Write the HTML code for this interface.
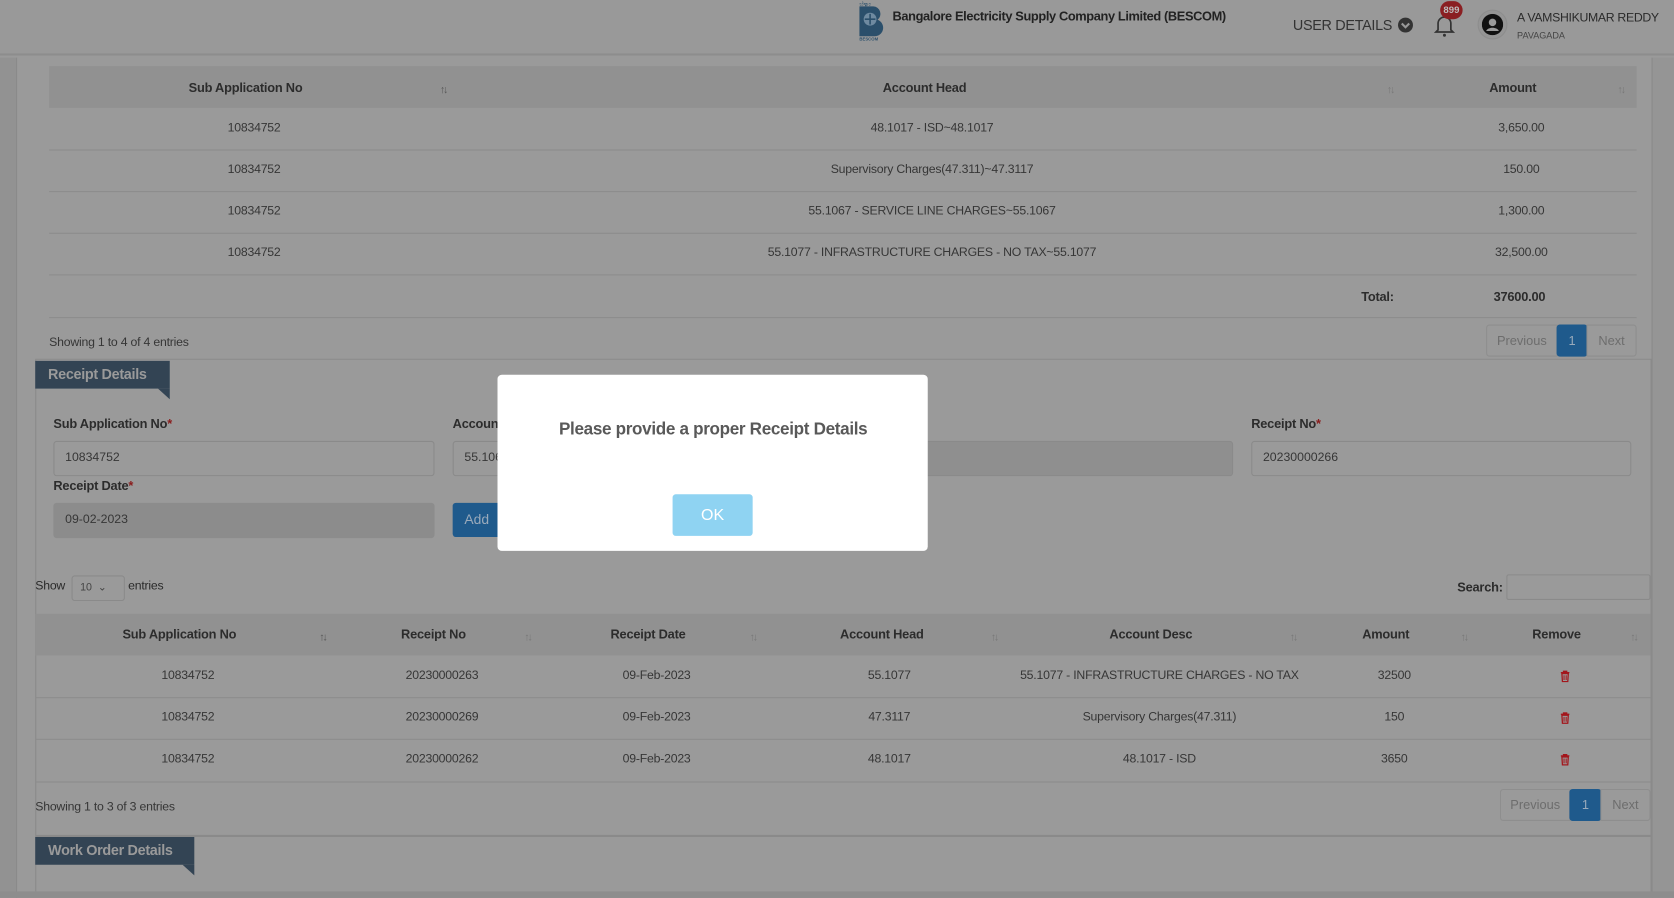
<!DOCTYPE html>
<html><head><meta charset="utf-8"><style>
*{box-sizing:border-box;margin:0;padding:0}
html,body{width:1674px;height:898px;overflow:hidden;background:#9a9a9a;font-family:"Liberation Sans",sans-serif}
#w{position:absolute;left:0;top:0;width:1568px;height:841px;transform:scale(1.06760);transform-origin:0 0;background:#9a9a9a;color:#333}
.a{position:absolute;white-space:nowrap}
.c{transform:translateX(-50%)}
.hr{position:absolute;height:1px;background:#8c8c8c}
.th{font-size:12px;font-weight:bold;color:#2c2c2c;letter-spacing:-0.2px}
.td{font-size:11.5px;color:#363636;letter-spacing:-0.2px}
.srt{font-size:10px;color:#777;letter-spacing:-2px}
.lbl{font-size:12px;font-weight:bold;color:#2c2c2c;letter-spacing:-0.2px}
.lbl b{color:#8a1c1c}
.inp{position:absolute;height:33px;border:1px solid #8a8a8a;border-radius:3px;font-size:11.5px;color:#363636;padding:9px 10px;white-space:nowrap}
.pg{position:absolute;height:30px;border:1px solid #8e8e8e;font-size:12px;color:#6d6d6d;text-align:center;line-height:28px;background:#9a9a9a}
.pb{background:#1f5a8c;color:#9ab;border-color:#1f5a8c;border-radius:3px}
.bdg{position:absolute;background:#334454;color:#9a9a9a;font-weight:bold;font-size:13.5px;padding:5px 12px;white-space:nowrap;letter-spacing:-0.3px}
.tri{position:absolute;width:0;height:0;border-top:10px solid #334454;border-left:11px solid transparent}
.tr{position:absolute;width:10px;height:11px}
</style></head><body><div id="w">
<div class="a" style="left:0;top:0;width:1568px;height:52px;background:#999;border-bottom:2px solid #8d8d8d"></div>
<div class="a" style="left:0;top:54px;width:16px;height:787px;background:#929292;border-right:1px solid #8a8a8a"></div>
<div class="a" style="left:1547px;top:54px;width:21px;height:787px;background:#959595;border-left:1px solid #8a8a8a"></div>
<div class="a" style="left:0;top:835px;width:1568px;height:6px;background:#8d8d8d"></div>
<svg class="a" style="left:803px;top:0" width="28" height="39" viewBox="0 0 28 39"><path d="M2 6h13a7 7 0 0 1 4 12.5A8 8 0 0 1 16 34H2z" fill="#2b4f6b"/><circle cx="12" cy="18" r="6" fill="#6f8aa0"/><path d="M12 13v10M7 18h10" stroke="#2b4f6b" stroke-width="1.5"/><text x="2" y="5" font-size="5" fill="#2b4f6b">ಬೆಸ್ಕಾಂ</text><text x="2" y="38" font-size="4" fill="#2b4f6b" font-weight="bold">BESCOM</text></svg>
<div class="a" style="left:836px;top:8px;font-size:12px;font-weight:bold;color:#222;letter-spacing:-0.35px">Bangalore Electricity Supply Company Limited (BESCOM)</div>
<div class="a" style="left:1211px;top:16px;font-size:13.5px;color:#333;letter-spacing:-0.3px">USER DETAILS</div>
<svg class="a" style="left:1309px;top:16px" width="15" height="15" viewBox="0 0 15 15"><circle cx="7.5" cy="7.5" r="7" fill="#333"/><path d="M4 6l3.5 3.5L11 6" stroke="#999" stroke-width="2" fill="none"/></svg>
<svg class="a" style="left:1343px;top:12px" width="20" height="24" viewBox="0 0 20 24"><path d="M4 16V10a6 6 0 0 1 12 0v6l2 2H2z" fill="none" stroke="#333" stroke-width="1.6"/><circle cx="10" cy="21" r="1.4" fill="#333"/></svg>
<div class="a" style="left:1349px;top:1px;width:21px;height:17px;border-radius:9px;background:#8a1f22;color:#bbb;font-size:9px;font-weight:bold;text-align:center;line-height:17px">899</div>
<div class="a" style="left:1384px;top:9px;width:28px;height:28px;border-radius:50%;background:#959595;border:1px solid #8d8d8d"></div>
<svg class="a" style="left:1388px;top:13px" width="20" height="20" viewBox="0 0 20 20"><circle cx="10" cy="10" r="10" fill="#111"/><circle cx="10" cy="8" r="3.5" fill="#999"/><path d="M4 16c2-4 10-4 12 0" fill="#999"/></svg>
<div class="a" style="left:1421px;top:11px;font-size:11.5px;color:#2a2a2a;letter-spacing:-0.3px">A VAMSHIKUMAR REDDY</div>
<div class="a" style="left:1421px;top:28px;font-size:8.5px;color:#444">PAVAGADA</div>

<div class="a" style="left:46px;top:62px;width:1487px;height:39px;background:#919191"></div>
<div class="a th c" style="left:230px;top:75px">Sub Application No</div>
<div class="a th c" style="left:866px;top:75px">Account Head</div>
<div class="a th c" style="left:1417px;top:75px">Amount</div>
<div class="a srt" style="left:412px;top:79px;color:#555">↑↓</div>
<div class="a srt" style="left:1299px;top:79px">↑↓</div>
<div class="a srt" style="left:1515px;top:79px">↑↓</div>
<div class="hr" style="left:46px;top:140px;width:1487px"></div>
<div class="hr" style="left:46px;top:179px;width:1487px"></div>
<div class="hr" style="left:46px;top:218px;width:1487px"></div>
<div class="hr" style="left:46px;top:257px;width:1487px"></div>
<div class="hr" style="left:46px;top:297px;width:1487px"></div>
<div class="a td c" style="left:238px;top:114px">10834752</div><div class="a td c" style="left:873px;top:114px">48.1017 - ISD~48.1017</div><div class="a td c" style="left:1425px;top:114px">3,650.00</div>
<div class="a td c" style="left:238px;top:153px">10834752</div><div class="a td c" style="left:873px;top:153px">Supervisory Charges(47.311)~47.3117</div><div class="a td c" style="left:1425px;top:153px">150.00</div>
<div class="a td c" style="left:238px;top:192px">10834752</div><div class="a td c" style="left:873px;top:192px">55.1067 - SERVICE LINE CHARGES~55.1067</div><div class="a td c" style="left:1425px;top:192px">1,300.00</div>
<div class="a td c" style="left:238px;top:231px">10834752</div><div class="a td c" style="left:873px;top:231px">55.1077 - INFRASTRUCTURE CHARGES - NO TAX~55.1077</div><div class="a td c" style="left:1425px;top:231px">32,500.00</div>
<div class="a th" style="left:1275px;top:271px">Total:</div>
<div class="a th" style="left:1399px;top:271px">37600.00</div>
<div class="a td" style="left:46px;top:315px">Showing 1 to 4 of 4 entries</div>
<div class="pg" style="left:1392px;top:304px;width:67px;border-radius:3px 0 0 3px">Previous</div>
<div class="pg pb" style="left:1458px;top:304px;width:29px">1</div>
<div class="pg" style="left:1486px;top:304px;width:47px;border-radius:0 3px 3px 0">Next</div>

<div class="a" style="left:33px;top:336px;width:1514px;height:448px;border:1px solid #8a8a8a;border-bottom:2px solid #8a8a8a"></div>
<div class="bdg" style="left:33px;top:338px;width:126px;height:26px">Receipt Details</div>
<div class="tri" style="left:148px;top:364px"></div>
<div class="a lbl" style="left:50px;top:390px">Sub Application No<b>*</b></div>
<div class="a lbl" style="left:424px;top:390px">Account Head<b>*</b></div>
<div class="a lbl" style="left:798px;top:390px">Amount<b>*</b></div>
<div class="a lbl" style="left:1172px;top:390px">Receipt No<b>*</b></div>
<div class="inp" style="left:50px;top:413px;width:357px">10834752</div>
<div class="inp" style="left:424px;top:413px;width:357px">55.1067</div>
<div class="inp" style="left:798px;top:413px;width:357px;background:#8f8f8f"></div>
<div class="inp" style="left:1172px;top:413px;width:356px">20230000266</div>
<div class="a lbl" style="left:50px;top:448px">Receipt Date<b>*</b></div>
<div class="inp" style="left:50px;top:471px;width:357px;background:#8c8c8c;border-color:#8c8c8c">09-02-2023</div>
<div class="a" style="left:424px;top:471px;width:60px;height:32px;background:#1f5a8c;border-radius:3px;color:#9aaabb;font-size:13px;padding:8px 11px">Add</div>

<div class="a td" style="left:33px;top:543px;color:#2a2a2a">Show</div>
<div class="a" style="left:67px;top:539px;width:50px;height:24px;border:1px solid #8a8a8a;border-radius:3px;font-size:10px;color:#444;padding:5px 7px">10 &nbsp;⌄</div>
<div class="a td" style="left:120px;top:543px;color:#2a2a2a">entries</div>
<div class="a th" style="left:1365px;top:543px">Search:</div>
<div class="a" style="left:1411px;top:538px;width:135px;height:24px;border:1px solid #8a8a8a;border-radius:2px"></div>

<div class="a" style="left:33px;top:575px;width:1513px;height:39px;background:#919191"></div>
<div class="a th c" style="left:168px;top:587px">Sub Application No</div>
<div class="a th c" style="left:406px;top:587px">Receipt No</div>
<div class="a th c" style="left:607px;top:587px">Receipt Date</div>
<div class="a th c" style="left:826px;top:587px">Account Head</div>
<div class="a th c" style="left:1078px;top:587px">Account Desc</div>
<div class="a th c" style="left:1298px;top:587px">Amount</div>
<div class="a th c" style="left:1458px;top:587px">Remove</div>
<div class="a srt" style="left:299px;top:592px;color:#555">↑↓</div>
<div class="a srt" style="left:491px;top:592px">↑↓</div>
<div class="a srt" style="left:702px;top:592px">↑↓</div>
<div class="a srt" style="left:928px;top:592px">↑↓</div>
<div class="a srt" style="left:1208px;top:592px">↑↓</div>
<div class="a srt" style="left:1368px;top:592px">↑↓</div>
<div class="a srt" style="left:1527px;top:592px">↑↓</div>
<div class="hr" style="left:33px;top:653px;width:1513px"></div>
<div class="hr" style="left:33px;top:692px;width:1513px"></div>
<div class="hr" style="left:33px;top:732px;width:1513px"></div>
<div class="a td c" style="left:176px;top:627px">10834752</div><div class="a td c" style="left:414px;top:627px">20230000263</div><div class="a td c" style="left:615px;top:627px">09-Feb-2023</div><div class="a td c" style="left:833px;top:627px">55.1077</div><div class="a td c" style="left:1086px;top:627px">55.1077 - INFRASTRUCTURE CHARGES - NO TAX</div><div class="a td c" style="left:1306px;top:627px">32500</div>
<div class="a td c" style="left:176px;top:666px">10834752</div><div class="a td c" style="left:414px;top:666px">20230000269</div><div class="a td c" style="left:615px;top:666px">09-Feb-2023</div><div class="a td c" style="left:833px;top:666px">47.3117</div><div class="a td c" style="left:1086px;top:666px">Supervisory Charges(47.311)</div><div class="a td c" style="left:1306px;top:666px">150</div>
<div class="a td c" style="left:176px;top:705px">10834752</div><div class="a td c" style="left:414px;top:705px">20230000262</div><div class="a td c" style="left:615px;top:705px">09-Feb-2023</div><div class="a td c" style="left:833px;top:705px">48.1017</div><div class="a td c" style="left:1086px;top:705px">48.1017 - ISD</div><div class="a td c" style="left:1306px;top:705px">3650</div>
<svg class="tr" style="left:1461px;top:628px" viewBox="0 0 10 11"><path d="M1 2h8M3.5 2V.8h3V2M2 3h6l-.5 7.5h-5z" fill="none" stroke="#a3161c" stroke-width="1.2"/><path d="M4 4.5v4.5M6 4.5v4.5" stroke="#a3161c"/></svg>
<svg class="tr" style="left:1461px;top:667px" viewBox="0 0 10 11"><path d="M1 2h8M3.5 2V.8h3V2M2 3h6l-.5 7.5h-5z" fill="none" stroke="#a3161c" stroke-width="1.2"/><path d="M4 4.5v4.5M6 4.5v4.5" stroke="#a3161c"/></svg>
<svg class="tr" style="left:1461px;top:706px" viewBox="0 0 10 11"><path d="M1 2h8M3.5 2V.8h3V2M2 3h6l-.5 7.5h-5z" fill="none" stroke="#a3161c" stroke-width="1.2"/><path d="M4 4.5v4.5M6 4.5v4.5" stroke="#a3161c"/></svg>
<div class="a td" style="left:33px;top:750px">Showing 1 to 3 of 3 entries</div>
<div class="pg" style="left:1405px;top:739px;width:66px;border-radius:3px 0 0 3px">Previous</div>
<div class="pg pb" style="left:1470px;top:739px;width:30px">1</div>
<div class="pg" style="left:1499px;top:739px;width:47px;border-radius:0 3px 3px 0">Next</div>

<div class="a" style="left:33px;top:784px;width:1514px;height:51px;border-left:1px solid #8a8a8a;border-right:1px solid #8a8a8a"></div>
<div class="bdg" style="left:33px;top:784px;width:149px;height:26px">Work Order Details</div>
<div class="tri" style="left:171px;top:810px"></div>

<div class="a" style="left:466px;top:351px;width:403px;height:165px;background:#fff;border-radius:4px"></div>
<div class="a c" style="left:668px;top:394px;font-size:16px;font-weight:bold;color:#595959;letter-spacing:-0.3px">Please provide a proper Receipt Details</div>
<div class="a" style="left:630px;top:463px;width:75px;height:39px;background:#8fd3f2;border-radius:3px;color:#fff;font-size:15px;text-align:center;line-height:39px">OK</div>
</div></body></html>
